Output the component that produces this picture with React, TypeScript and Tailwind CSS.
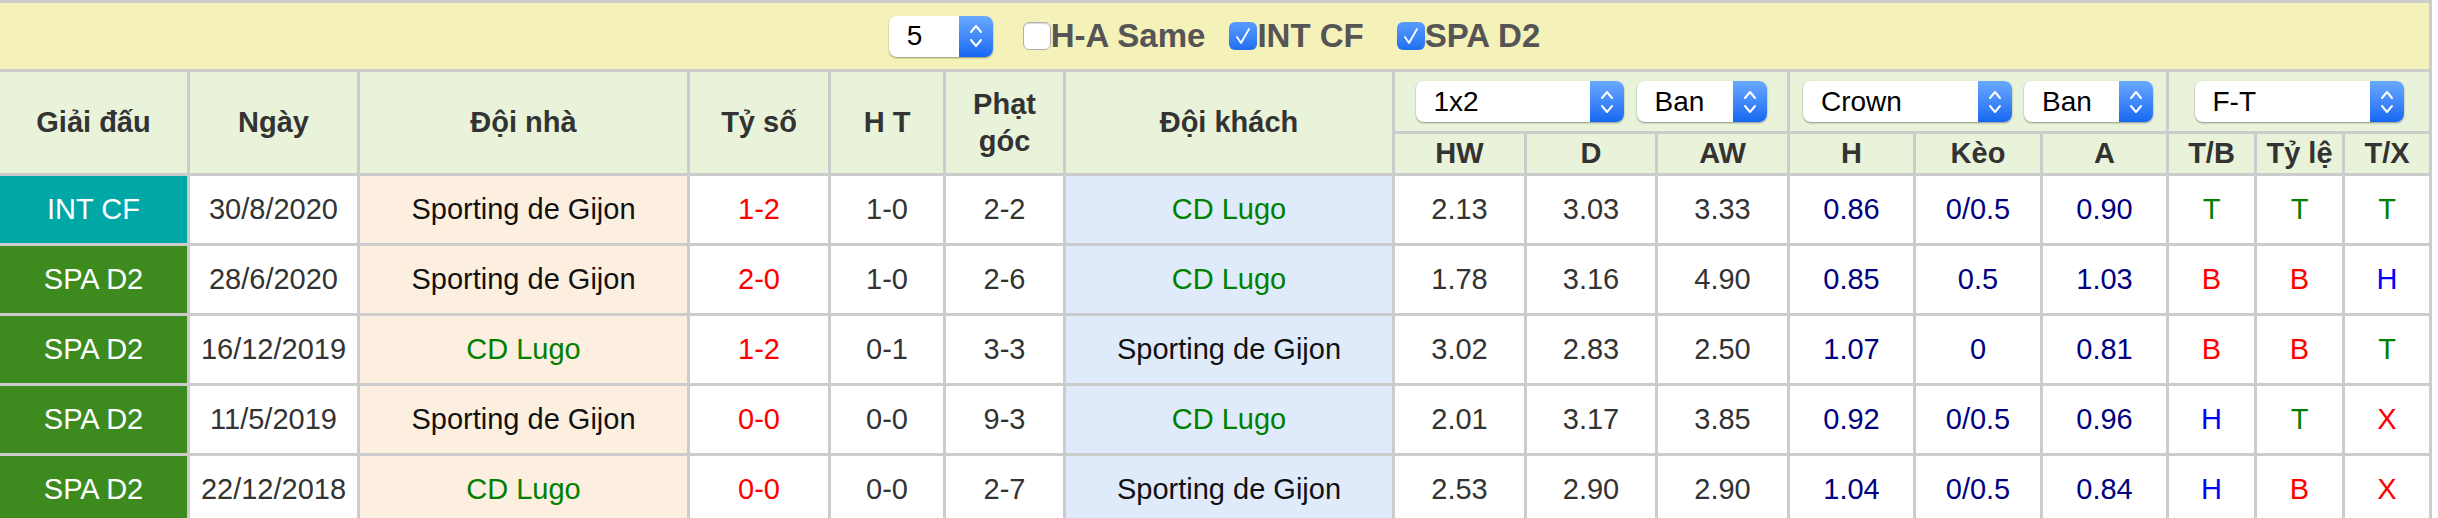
import React from 'react'

interface Match {
  league: string
  date: string
  home: string
  score: string
  ht: string
  corner: string
  away: string
  hw: string
  d: string
  aw: string
  h: string
  keo: string
  a: string
  tb: string
  tl: string
  tx: string
}

const MATCHES: Match[] = [
  { league: 'INT CF', date: '30/8/2020', home: 'Sporting de Gijon', score: '1-2', ht: '1-0', corner: '2-2', away: 'CD Lugo', hw: '2.13', d: '3.03', aw: '3.33', h: '0.86', keo: '0/0.5', a: '0.90', tb: 'T', tl: 'T', tx: 'T' },
  { league: 'SPA D2', date: '28/6/2020', home: 'Sporting de Gijon', score: '2-0', ht: '1-0', corner: '2-6', away: 'CD Lugo', hw: '1.78', d: '3.16', aw: '4.90', h: '0.85', keo: '0.5', a: '1.03', tb: 'B', tl: 'B', tx: 'H' },
  { league: 'SPA D2', date: '16/12/2019', home: 'CD Lugo', score: '1-2', ht: '0-1', corner: '3-3', away: 'Sporting de Gijon', hw: '3.02', d: '2.83', aw: '2.50', h: '1.07', keo: '0', a: '0.81', tb: 'B', tl: 'B', tx: 'T' },
  { league: 'SPA D2', date: '11/5/2019', home: 'Sporting de Gijon', score: '0-0', ht: '0-0', corner: '9-3', away: 'CD Lugo', hw: '2.01', d: '3.17', aw: '3.85', h: '0.92', keo: '0/0.5', a: '0.96', tb: 'H', tl: 'T', tx: 'X' },
  { league: 'SPA D2', date: '22/12/2018', home: 'CD Lugo', score: '0-0', ht: '0-0', corner: '2-7', away: 'Sporting de Gijon', hw: '2.53', d: '2.90', aw: '2.90', h: '1.04', keo: '0/0.5', a: '0.84', tb: 'H', tl: 'B', tx: 'X' },
]

const RESULT_COLOR: Record<string, string> = {
  T: 'text-[#008000]',
  B: 'text-[#ff0000]',
  H: 'text-[#0000ff]',
  X: 'text-[#ff0000]',
}

function Chevrons() {
  return (
    <svg width="14" height="26" viewBox="0 0 14 26" fill="none" stroke="white" strokeWidth="2" strokeLinecap="round" strokeLinejoin="round">
      <path d="M2 9 L7 3 L12 9" />
      <path d="M2 17 L7 23 L12 17" />
    </svg>
  )
}

function FakeSelect({ label, className }: { label: string; className: string }) {
  return (
    <div className={`flex h-[41px] items-stretch overflow-hidden rounded-[8px] bg-white shadow-[0_1px_2px_rgba(0,0,0,0.4)] ${className}`}>
      <span className="flex flex-1 items-center pl-[18px] text-[28px] text-black">{label}</span>
      <span className="flex w-[34px] items-center justify-center bg-gradient-to-b from-[#6aa9ff] to-[#1467f2]">
        <Chevrons />
      </span>
    </div>
  )
}

function Checkbox({ checked, className = '' }: { checked: boolean; className?: string }) {
  if (!checked) {
    return <span className={`block h-[28px] w-[28px] shrink-0 rounded-[6px] border border-[#b0b0b0] bg-white shadow-[inset_0_1px_1px_rgba(0,0,0,0.15)] ${className}`} />
  }
  return (
    <span className={`flex h-[28px] w-[28px] shrink-0 items-center justify-center rounded-[6px] bg-gradient-to-b from-[#5a9cff] to-[#1f6ff0] ${className}`}>
      <svg width="16" height="18" viewBox="0 0 16 18" fill="none" stroke="white" strokeWidth="1.8" strokeLinecap="round" strokeLinejoin="round">
        <path d="M2 10 L6 16 L14 2" />
      </svg>
    </span>
  )
}

function Head({ children, className = '' }: { children: React.ReactNode; className?: string }) {
  return (
    <div className={`flex items-center justify-center bg-[#e9f3da] text-center text-[29px] font-bold text-[#333] ${className}`}>
      {children}
    </div>
  )
}

function Cell({ children, className = '' }: { children: React.ReactNode; className?: string }) {
  return <div className={`flex items-center justify-center text-[29px] ${className}`}>{children}</div>
}

export default function App() {
  return (
    <div className="min-h-screen bg-white font-['Liberation_Sans',Arial,sans-serif]">
      <div className="flex w-[2432px] flex-col gap-[3px] bg-[#cccccc] pt-[3px] pr-[3px]">
        {/* filter bar */}
        <div className="flex h-[66px] items-center justify-center whitespace-nowrap bg-[#f5f2b9] text-[33px] font-bold text-[#555]">
          <FakeSelect label="5" className="w-[104px] font-normal" />
          <Checkbox checked={false} className="ml-[30px]" />
          <span>H-A Same</span>
          <Checkbox checked className="ml-[24px]" />
          <span>INT CF</span>
          <Checkbox checked className="ml-[33px]" />
          <span>SPA D2</span>
        </div>

        <div className="grid grid-cols-[187px_167px_327px_138px_112px_117px_326px_129px_128px_129px_123px_124px_123px_85px_85px_84px] grid-rows-[59px_39px_repeat(5,67px)] gap-[3px]">
          <Head className="row-span-2">Giải đấu</Head>
          <Head className="row-span-2">Ngày</Head>
          <Head className="row-span-2">Đội nhà</Head>
          <Head className="row-span-2">Tỷ số</Head>
          <Head className="row-span-2">H T</Head>
          <Head className="row-span-2 leading-[37px]">Phạt<br />góc</Head>
          <Head className="row-span-2">Đội khách</Head>
          <Head className="col-span-3 gap-[13px] font-normal">
            <FakeSelect label="1x2" className="w-[208px]" />
            <FakeSelect label="Ban" className="w-[130px]" />
          </Head>
          <Head className="col-span-3 gap-[12px] font-normal">
            <FakeSelect label="Crown" className="w-[209px]" />
            <FakeSelect label="Ban" className="w-[129px]" />
          </Head>
          <Head className="col-span-3 font-normal">
            <FakeSelect label="F-T" className="w-[209px]" />
          </Head>
          <Head>HW</Head>
          <Head>D</Head>
          <Head>AW</Head>
          <Head>H</Head>
          <Head>Kèo</Head>
          <Head>A</Head>
          <Head>T/B</Head>
          <Head>Tỷ lệ</Head>
          <Head>T/X</Head>

          {MATCHES.map((m) => (
            <React.Fragment key={m.date}>
              <Cell className={`text-white ${m.league === 'INT CF' ? 'bg-[#00a7a7]' : 'bg-[#3d8b1f]'}`}>{m.league}</Cell>
              <Cell className="bg-white text-[#333]">{m.date}</Cell>
              <Cell className={`bg-[#fcefe0] ${m.home === 'CD Lugo' ? 'text-[#008000]' : 'text-[#111]'}`}>{m.home}</Cell>
              <Cell className="bg-white text-[#ff0000]">{m.score}</Cell>
              <Cell className="bg-white text-[#333]">{m.ht}</Cell>
              <Cell className="bg-white text-[#333]">{m.corner}</Cell>
              <Cell className={`bg-[#dfebfb] ${m.away === 'CD Lugo' ? 'text-[#008000]' : 'text-[#111]'}`}>{m.away}</Cell>
              <Cell className="bg-white text-[#333]">{m.hw}</Cell>
              <Cell className="bg-white text-[#333]">{m.d}</Cell>
              <Cell className="bg-white text-[#333]">{m.aw}</Cell>
              <Cell className="bg-white text-[#000080]">{m.h}</Cell>
              <Cell className="bg-white text-[#000080]">{m.keo}</Cell>
              <Cell className="bg-white text-[#000080]">{m.a}</Cell>
              <Cell className={`bg-white ${RESULT_COLOR[m.tb]}`}>{m.tb}</Cell>
              <Cell className={`bg-white ${RESULT_COLOR[m.tl]}`}>{m.tl}</Cell>
              <Cell className={`bg-white ${RESULT_COLOR[m.tx]}`}>{m.tx}</Cell>
            </React.Fragment>
          ))}
        </div>
      </div>
    </div>
  )
}
